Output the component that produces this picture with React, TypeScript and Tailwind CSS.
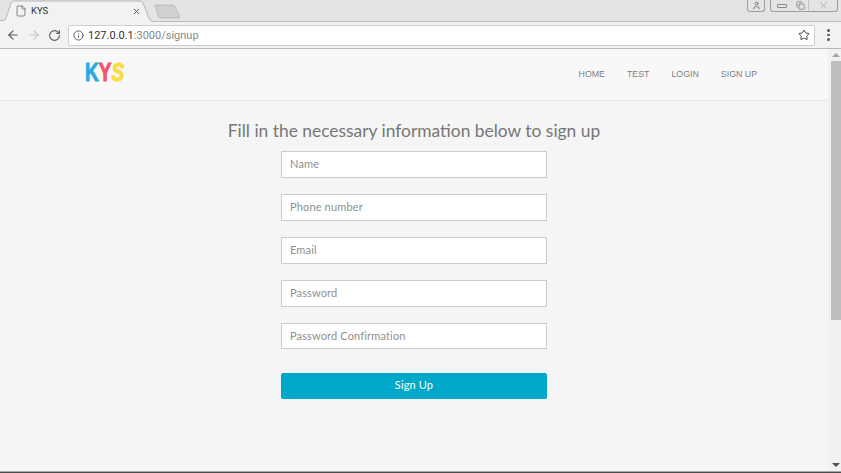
import { ArrowLeft, ArrowRight, RotateCw, Info, Star, File, X, User, Copy } from "lucide-react";

const fields = ["Name", "Phone number", "Email", "Password", "Password Confirmation"];
const links = ["HOME", "TEST", "LOGIN", "SIGN UP"];

function BrowserChrome() {
  return (
    <div className="shrink-0 font-['Roboto',sans-serif]">
      {/* tab strip */}
      <div className="h-[22px] bg-[#e4e4e4] border-b border-[#bdbdbd] flex justify-between relative">
        <div className="relative w-[152px] h-[22px] flex items-center pl-[15px] pr-[8px] gap-[4px]">
          <svg className="absolute left-0 top-0" width="152" height="22" viewBox="0 0 152 22">
            <path d="M0 20.5 H3 Q5 20.5 6 18 L11 3 Q12 1 14 1 H140 Q142 1 143 3 L149 18 Q150 20.5 152 21.5 V22 H0 Z" fill="#f2f2f2" />
            <path d="M0 20.5 H3 Q5 20.5 6 18 L11 3 Q12 1 14 1 H140 Q142 1 143 3 L149 18 Q150 20.5 152 21.5" fill="none" stroke="#b5b5b5" />
          </svg>
          <File className="relative text-[#5f5f5f]" size={12} strokeWidth={1.5} />
          <span className="relative text-[9.5px] text-[#333] flex-1 leading-none">KYS</span>
          <X className="relative text-[#555] mr-[3px]" size={9} strokeWidth={2.5} />
        </div>
        <svg className="absolute left-[154px] top-[4px]" width="27" height="15" viewBox="0 0 27 15">
          <path d="M1 1.5 Q1 1 2 1 H18 Q20 1 21 3 L25.5 12 Q26 14 24 14 H7 Q5 14 4.5 12 Z" fill="#d0d0d0" stroke="#bcbcbc" />
        </svg>
        <div className="flex items-start gap-[5px] pr-[3px] pl-[120px]">
          <div className="w-[18px] h-[12px] border border-t-0 border-[#9d9d9d] rounded-b-[3px] flex items-center justify-center">
            <User className="text-[#666]" size={9} />
          </div>
          <div className="w-[68px] h-[12px] border border-t-0 border-[#9d9d9d] rounded-b-[3px] flex">
            <div className="w-[21px] flex items-center justify-center">
              <div className="w-[10px] h-[4px] border border-[#8a8a8a] rounded-[1px]" />
            </div>
            <div className="w-[17px] flex items-center justify-center border-r border-[#c4c4c4]">
              <Copy className="text-[#777]" size={9} />
            </div>
            <div className="flex-1 flex items-center justify-center">
              <X className="text-[#b0b0b0]" size={11} />
            </div>
          </div>
        </div>
      </div>
      {/* toolbar */}
      <div className="h-[27px] bg-[#f2f2f2] border-b border-[#b9b9b9] flex items-center pl-[6px] pr-[8px]">
        <ArrowLeft className="text-[#5a5a5a]" size={14} strokeWidth={2} />
        <ArrowRight className="text-[#c6c6c6] ml-[7px]" size={14} strokeWidth={2} />
        <RotateCw className="text-[#5a5a5a] ml-[7px]" size={13} strokeWidth={2} />
        <div className="ml-[7px] h-[21px] w-[747px] bg-white border border-[#cfcfcf] rounded-[2px] flex items-center pl-[4px] pr-[4px]">
          <Info className="text-[#555]" size={11} strokeWidth={2} />
          <span className="ml-[4px] text-[11px] text-[#333] leading-none flex-1">
            127.0.0.1<span className="text-[#888]">:3000/signup</span>
          </span>
          <Star className="text-[#444]" size={12} strokeWidth={2} />
        </div>
        <div className="ml-[12px] flex flex-col gap-[2px]">
          <div className="w-[2.5px] h-[2.5px] rounded-full bg-[#555]" />
          <div className="w-[2.5px] h-[2.5px] rounded-full bg-[#555]" />
          <div className="w-[2.5px] h-[2.5px] rounded-full bg-[#555]" />
        </div>
      </div>
    </div>
  );
}

function Scrollbar() {
  return (
    <div className="w-[13px] shrink-0 bg-[#f1f1f1] flex flex-col items-end">
      <div className="w-full h-[12px] flex items-center justify-center pl-[2px]">
        <div className="w-0 h-0 border-x-[4px] border-x-transparent border-b-[4px] border-b-[#a3a3a3]" />
      </div>
      <div className="w-[10px] h-[259px] bg-[#bdbdbd]" />
      <div className="flex-1" />
      <div className="w-full h-[12px] flex items-center justify-center pl-[2px]">
        <div className="w-0 h-0 border-x-[4px] border-x-transparent border-t-[4px] border-t-[#505050]" />
      </div>
    </div>
  );
}

function Page() {
  return (
    <div className="flex-1 min-w-0 bg-[#f5f5f5]">
      {/* navbar */}
      <header className="h-[52px] bg-[#f8f8f8] border-b border-[#e7e7e7] flex items-center justify-between pl-[85px] pr-[71px]">
        <div className="w-[39px] h-[20px] -mt-[4px] flex items-center">
          <span className="origin-left scale-x-[0.76] text-[25px] leading-none font-bold font-['Liberation_Sans',sans-serif] whitespace-nowrap [-webkit-text-stroke:1px_currentColor]">
            <span className="text-[#29abe2]">K</span>
            <span className="text-[#f2566b]">Y</span>
            <span className="text-[#fcdb3e] italic">S</span>
          </span>
        </div>
        <nav className="flex gap-[22px] text-[8.8px] text-[#808080] font-['Liberation_Sans',sans-serif]">
          {links.map((l) => (
            <a key={l} href="#">{l}</a>
          ))}
        </nav>
      </header>
      {/* form */}
      <main className="flex flex-col items-center font-['Lato',sans-serif]">
        <h1 className="mt-[20px] mb-[9px] h-[21px] leading-[19px] text-[17.4px] text-[#777] whitespace-nowrap">
          Fill in the necessary information below to sign up
        </h1>
        <form className="w-[266px] flex flex-col gap-[16px]">
          {fields.map((f) => (
            <input
              key={f}
              placeholder={f}
              className="h-[26.9px] w-full bg-white border border-[#ccc] px-[8px] pb-[1px] text-[11px] tracking-[0.15px] placeholder:text-[#8f8f8f] outline-none"
            />
          ))}
          <button
            type="button"
            className="mt-[7.5px] h-[26px] w-full bg-[#00a9c9] rounded-[2px] text-white text-[11px] tracking-[0.15px] pb-[1px]"
          >
            Sign Up
          </button>
        </form>
      </main>
    </div>
  );
}

export default function App() {
  return (
    <div className="h-[473px] w-[841px] overflow-hidden flex flex-col">
      <BrowserChrome />
      <div className="flex-1 min-h-0 flex">
        <Page />
        <Scrollbar />
      </div>
      <div className="h-[2px] shrink-0 bg-[#4a4a4a] border-t border-[#a8a8a8]" />
    </div>
  );
}
